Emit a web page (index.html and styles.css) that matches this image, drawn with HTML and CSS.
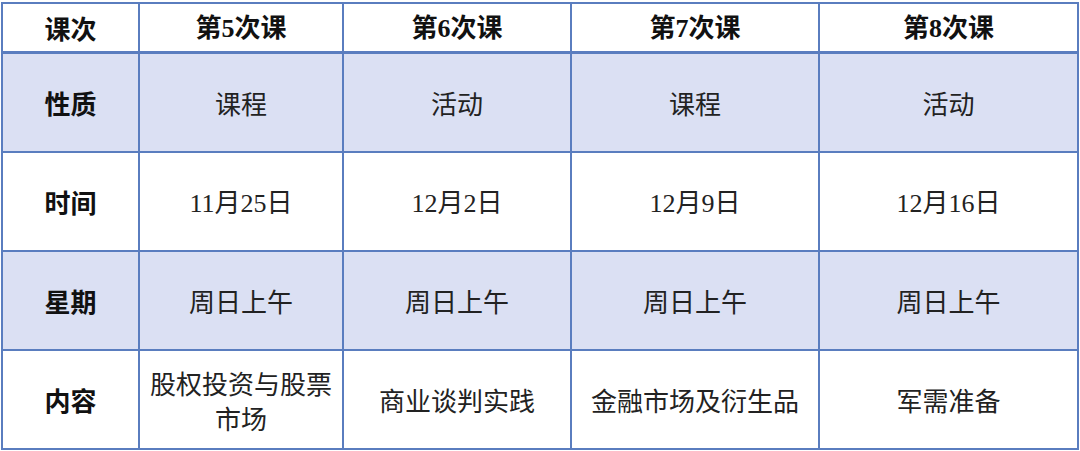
FILE: index.html
```html
<!DOCTYPE html>
<html lang="zh-CN">
<head>
<meta charset="utf-8">
<link rel="stylesheet" href="styles.css">
</head>
<body>
<table class="schedule">
  <colgroup>
    <col class="c0"><col class="c1"><col class="c2"><col class="c3"><col class="c4">
  </colgroup>
  <tr class="head">
    <th>课次</th><th>第<span class="num">5</span>次课</th><th>第<span class="num">6</span>次课</th><th>第<span class="num">7</span>次课</th><th>第<span class="num">8</span>次课</th>
  </tr>
  <tr class="shade r1">
    <th>性质</th><td>课程</td><td>活动</td><td>课程</td><td>活动</td>
  </tr>
  <tr class="r2">
    <th>时间</th><td><span class="num">11</span>月<span class="num">25</span>日</td><td><span class="num">12</span>月<span class="num">2</span>日</td><td><span class="num">12</span>月<span class="num">9</span>日</td><td><span class="num">12</span>月<span class="num">16</span>日</td>
  </tr>
  <tr class="shade r3">
    <th>星期</th><td>周日上午</td><td>周日上午</td><td>周日上午</td><td>周日上午</td>
  </tr>
  <tr class="r4">
    <th>内容</th><td>股权投资与股票市场</td><td>商业谈判实践</td><td>金融市场及衍生品</td><td>军需准备</td>
  </tr>
</table>
</body>
</html>
```
FILE: styles.css
```css
html, body {
  margin: 0;
  padding: 0;
  background: #ffffff;
}
body {
  padding: 2px 0 0 1px;
  font-family: "Noto Sans CJK SC", "Noto Sans", sans-serif;
  color: #1e1e1e;
}
.schedule {
  border-collapse: collapse;
  table-layout: fixed;
  width: 1076px;
}
.c0 { width: 137px; }
.c1 { width: 204px; }
.c2 { width: 228px; }
.c3 { width: 248px; }
.c4 { width: 259px; }
.schedule th,
.schedule td {
  border: 2px solid #5a7dbf;
  text-align: center;
  vertical-align: middle;
  padding: 0 8px;
  font-size: 26px;
  line-height: 35px;
}
.schedule th {
  font-weight: bold;
  color: #111;
}
.schedule td {
  font-weight: normal;
  color: #222;
}
.head { height: 49px; }
.head th { border-bottom-width: 3px; }
.r1 { height: 100px; }
.r2, .r3, .r4 { height: 99px; }
.shade th, .shade td {
  background: #dbe0f3;
}
.num {
  font-family: "Liberation Serif", "Times New Roman", serif;
}
```
